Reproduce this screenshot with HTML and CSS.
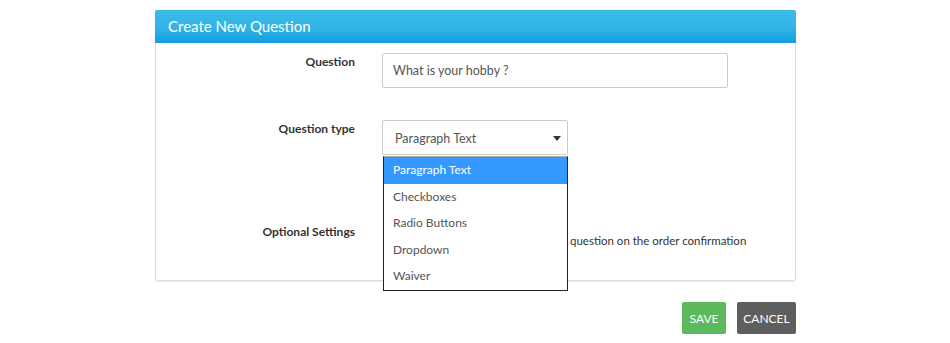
FILE: index.html
```html
<!DOCTYPE html>
<html lang="en">
<head>
    <meta charset="UTF-8">
    <title>Create New Question</title>
    <link rel="stylesheet" href="styles.css">
</head>
<body>
    <div class="container">
        <div class="panel">
            <div class="panel-head">Create New Question</div>
            <div class="panel-body">
                <div class="row">
                    <label class="label">Question</label>
                    <div class="field">
                        <div class="input">What is your hobby ?</div>
                    </div>
                </div>
                <div class="row row-type">
                    <label class="label">Question type</label>
                    <div class="field">
                        <div class="select">
                            <span>Paragraph Text</span>
                            <span class="caret"></span>
                            <ul class="options">
                                <li class="active">Paragraph Text</li>
                                <li>Checkboxes</li>
                                <li>Radio Buttons</li>
                                <li>Dropdown</li>
                                <li>Waiver</li>
                            </ul>
                        </div>
                    </div>
                </div>
                <div class="row row-opt">
                    <label class="label">Optional Settings</label>
                    <div class="field">
                        <!-- start of the line sits under the open dropdown -->
                        <div class="check">question on the order confirmation</div>
                    </div>
                </div>
            </div>
        </div>
        <div class="actions">
            <button type="button" class="btn btn-save">SAVE</button>
            <button type="button" class="btn btn-cancel">CANCEL</button>
        </div>
    </div>
</body>
</html>
```

FILE: styles.css
```css
body{
    margin: 0;
    background-color: white;
}
body *{
    font-family: "Lato", "Open Sans", sans-serif;
}
div.container{
    width: 641px;
    margin-left: 155px;
    padding-top: 10px;
}
div.panel{
    border: 1px solid #dcdcdc;
    border-radius: 3px;
    box-shadow: 0 1px 2px rgba(0,0,0,0.08);
}
div.panel-head{
    height: 33px;
    line-height: 32px;
    padding-left: 13px;
    color: white;
    font-size: 15px;
    background: linear-gradient(#3bbbe9, #30b4e6 55%, #129ce2);
    border-radius: 2px 2px 0 0;
    margin: -1px -1px 0 -1px;
}
div.panel-body{
    height: 227px;
    padding-top: 10px;
}
div.row{
    display: grid;
    grid-template-columns: 199px 346px;
    column-gap: 27px;
}
label.label{
    text-align: right;
    font-weight: bold;
    font-size: 12px;
    color: #333;
    padding-top: 1px;
}
div.input{
    height: 33px;
    line-height: 34px;
    border: 1px solid #ccc;
    border-radius: 2px;
    padding-left: 10px;
    font-size: 12.5px;
    color: #555;
}
div.row-type{
    margin-top: 32px;
}
div.select{
    position: relative;
    width: 172px;
    height: 33px;
    line-height: 35px;
    border: 1px solid #ccc;
    border-radius: 2px;
    padding-left: 12px;
    font-size: 12.5px;
    color: #555;
}
span.caret{
    position: absolute;
    right: 6px;
    top: 15px;
    border-left: 4px solid transparent;
    border-right: 4px solid transparent;
    border-top: 5px solid #333;
}
ul.options{
    position: absolute;
    left: 0;
    top: 35px;
    width: 183px;
    margin: 0;
    padding: 0;
    list-style: none;
    background: white;
    border: 1px solid #222;
    border-top-color: #aaa;
    z-index: 2;
}
ul.options li{
    height: 26.6px;
    line-height: 26px;
    padding-left: 9px;
    font-size: 12px;
    color: #555;
}
ul.options li.active{
    background-color: #3399ff;
    color: white;
}
div.row-opt{
    margin-top: 68px;
}
div.check{
    font-size: 11.5px;
    color: #333;
    padding-top: 11px;
    padding-left: 188px;
    white-space: nowrap;
}
div.actions{
    display: flex;
    justify-content: flex-end;
    gap: 11px;
    margin-top: 21px;
}
.btn{
    height: 32px;
    border: none;
    border-radius: 2px;
    color: white;
    font-size: 12px;
    padding: 0;
}
.btn-save{
    background-color: #5cb85c;
    width: 44px;
}
.btn-cancel{
    background-color: #5e5e5e;
    width: 59px;
}
```
